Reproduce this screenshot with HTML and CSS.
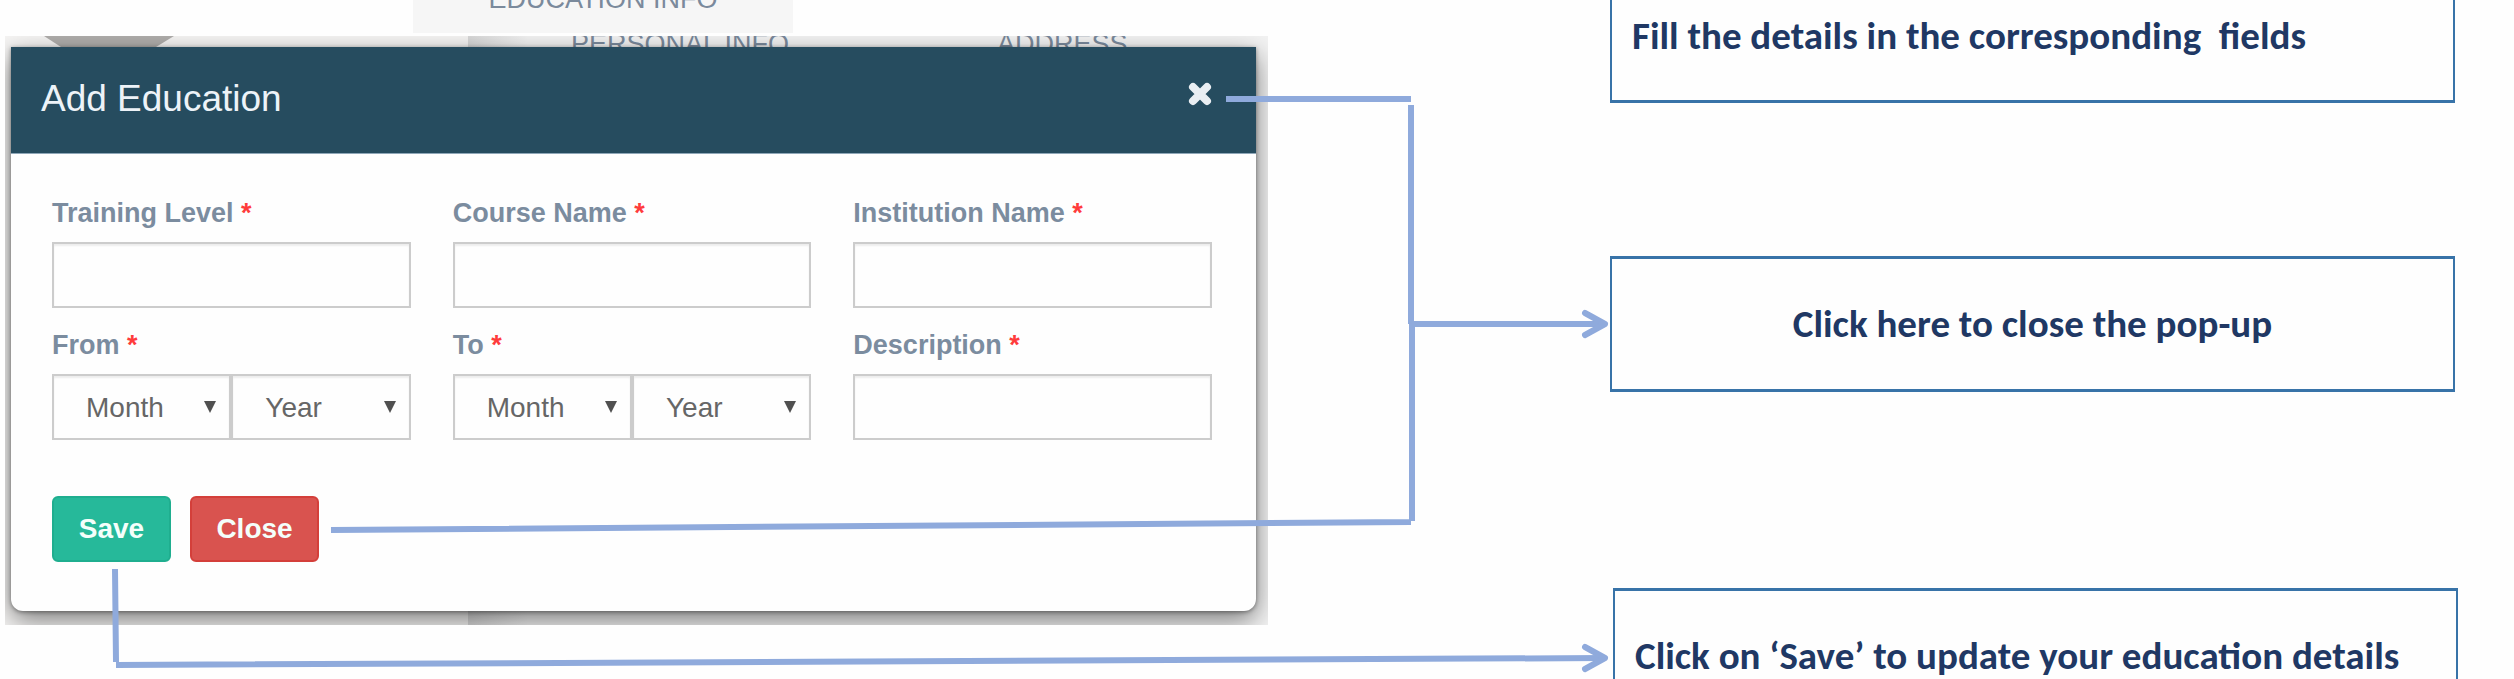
FILE: index.html
```html
<!DOCTYPE html>
<html lang="en">
<head>
<meta charset="utf-8">
<title>Add Education</title>
<link rel="stylesheet" href="styles.css">
</head>
<body>
<main class="page">
  <section class="demo">
    <div class="tab-row"><span class="tab">EDUCATION INFO</span></div>
    <div class="stage">
      <div class="behind" aria-hidden="true">
        <svg class="avatar" viewBox="0 0 130 11" preserveAspectRatio="none"><path d="M0 0H130L112 11H17Z" fill="#b0aeac"/></svg>
        <div class="behind-tabs"><span>PERSONAL INFO</span><span>ADDRESS</span></div>
      </div>
      <form class="modal">
        <header class="modal-head">
          <h1 class="title">Add Education</h1>
          <button class="dismiss" type="button" aria-label="Dismiss">
            <svg viewBox="0 0 24 24"><path d="M5 5L19 19M19 5L5 19" stroke="#e9eef2" stroke-width="8" stroke-linecap="round"/></svg>
          </button>
        </header>
        <div class="fields">
          <div class="field"><label for="level">Training Level <span class="req">*</span></label><input id="level" type="text"></div>
          <div class="field"><label for="course">Course Name <span class="req">*</span></label><input id="course" type="text"></div>
          <div class="field"><label for="inst">Institution Name <span class="req">*</span></label><input id="inst" type="text"></div>
          <div class="field"><label for="from-month">From <span class="req">*</span></label>
            <div class="pair">
              <div class="pick"><select id="from-month"><option>Month</option></select></div>
              <div class="pick"><select aria-label="From year"><option>Year</option></select></div>
            </div>
          </div>
          <div class="field"><label for="to-month">To <span class="req">*</span></label>
            <div class="pair">
              <div class="pick"><select id="to-month"><option>Month</option></select></div>
              <div class="pick"><select aria-label="To year"><option>Year</option></select></div>
            </div>
          </div>
          <div class="field"><label for="desc">Description <span class="req">*</span></label><input id="desc" type="text"></div>
        </div>
        <div class="actions">
          <button class="btn save" type="button">Save</button>
          <button class="btn close" type="button">Close</button>
        </div>
      </form>
    </div>
  </section>
  <aside class="notes">
    <p class="note first">Fill the details in the corresponding &nbsp;fields</p>
    <p class="note middle">Click here to close the pop-up</p>
    <p class="note last">Click on ‘Save’ to update your education details</p>
  </aside>
  <svg class="wires" viewBox="0 0 2514 679" preserveAspectRatio="none" aria-hidden="true">
    <path d="M1226 99H1411M1411 105V324M1412 324V521M331 530L1411 522M1412 324H1604M115 569L116 662M116 665L1604 658"/>
    <path class="tip" d="M1585 313L1605 324L1585 335M1585 647L1605 658L1585 669"/>
  </svg>
</main>
</body>
</html>
```
FILE: styles.css
```css
* { box-sizing: border-box; }
body {
  margin: 0;
  background: #fefefe;
  font-family: "Liberation Sans", Arial, sans-serif;
}
.page {
  position: relative;
  display: grid;
  grid-template-columns: 1268fr 1246fr;
  height: 100vh;
  overflow: hidden;
}
.demo { padding-left: 5px; }
.tab-row {
  display: flex;
  height: 33px;
  margin-bottom: 3px;
  padding-left: 408px;
}
.tab {
  display: flex;
  align-items: flex-end;
  width: 380px;
  justify-content: center;
  padding-bottom: 18px;
  background: #f6f6f6;
  color: #7b8a9c;
  font-size: 27px;
  line-height: 32px;
}
.stage {
  position: relative;
  padding: 11px 12px 14px 6px;
  background: #f6f5f4;
  overflow: hidden;
}
.behind {
  position: absolute;
  inset: 0;
  background: linear-gradient(90deg, #d8d8d8, #f3f3f3 60px) 463px 0 no-repeat;
}
.avatar {
  position: absolute;
  left: 39px;
  top: 0;
  width: 130px;
  height: 11px;
}
.behind-tabs {
  display: flex;
  gap: 208px;
  padding-left: 566px;
  margin-top: -8px;
  color: #7b8a9c;
  font-size: 27px;
  line-height: 32px;
}
.modal {
  position: relative;
  height: 564px;
  background: #fefefe;
  border-radius: 0 0 12px 12px;
  box-shadow: 0 9px 27px rgba(0, 0, 0, 0.5), 0 1px 4px rgba(0, 0, 0, 0.4);
}
.modal-head {
  display: flex;
  justify-content: space-between;
  height: 107px;
  padding: 32px 44px 0 30px;
  background: #264c5f;
  border-bottom: 1px solid #8fa7b8;
}
.title {
  margin: 0;
  color: #edf3f8;
  font-size: 37px;
  font-weight: 400;
  line-height: 40px;
}
.dismiss {
  width: 24px;
  height: 24px;
  margin-top: 3px;
  padding: 0;
  border: 0;
  background: none;
}
.dismiss svg { display: block; width: 24px; height: 24px; }
.fields {
  display: grid;
  grid-template-columns: repeat(3, 1fr);
  gap: 18px 42px;
  padding: 40px 44px 0 41px;
}
.field { display: grid; grid-template-rows: 48px 66px; min-width: 0; }
.field label {
  padding-top: 3px;
  color: #7b8c9f;
  font-size: 27px;
  font-weight: 700;
  line-height: 32px;
}
.req { color: #ff3b3b; }
.field input, .pick select {
  width: 100%;
  height: 66px;
  border: 2px solid #cccccc;
  border-radius: 0;
  background: #fefefe;
  box-shadow: inset 0 2px 2px rgba(0, 0, 0, 0.07);
}
.pair { display: flex; }
.pick { position: relative; flex: 1; }
.pick select {
  appearance: none;
  padding: 0 32px;
  color: #666666;
  font: 28px "Liberation Sans", Arial, sans-serif;
}
.pick::after {
  content: "";
  position: absolute;
  top: 27px;
  right: 15px;
  border: 6px solid transparent;
  border-top: 12px solid #505050;
  border-bottom: 0;
}
.actions { display: flex; gap: 19px; padding: 56px 0 0 41px; }
.btn {
  height: 66px;
  border-radius: 6px;
  color: #f4fffb;
  font: bold 28px "Liberation Sans", Arial, sans-serif;
}
.save { width: 119px; border: 2px solid #1fae8f; background: #26b99a; }
.close { width: 129px; border: 2px solid #d43f3a; background: #d9534f; }
.notes { padding: 0 59px 0 342px; }
.note {
  margin: 0;
  border: 3px solid #3873a8;
  border-width: 3px 2px;
  color: #203864;
  font-family: Carlito, Lato, sans-serif;
  font-size: 39px;
  font-weight: 700;
  line-height: 44px;
  white-space: nowrap;
}
.first { height: 103px; padding: 14px 20px; border-top: 0; }
.middle { height: 136px; margin-top: 153px; padding-top: 43px; text-align: center; }
.last { height: 136px; margin: 196px -3px 0 3px; padding: 43px 20px; }
.wires {
  position: absolute;
  inset: 0;
  width: 100%;
  height: 679px;
  fill: none;
  stroke: #8faadc;
  stroke-width: 6;
}
.tip { stroke-linecap: round; stroke-linejoin: round; }
```
